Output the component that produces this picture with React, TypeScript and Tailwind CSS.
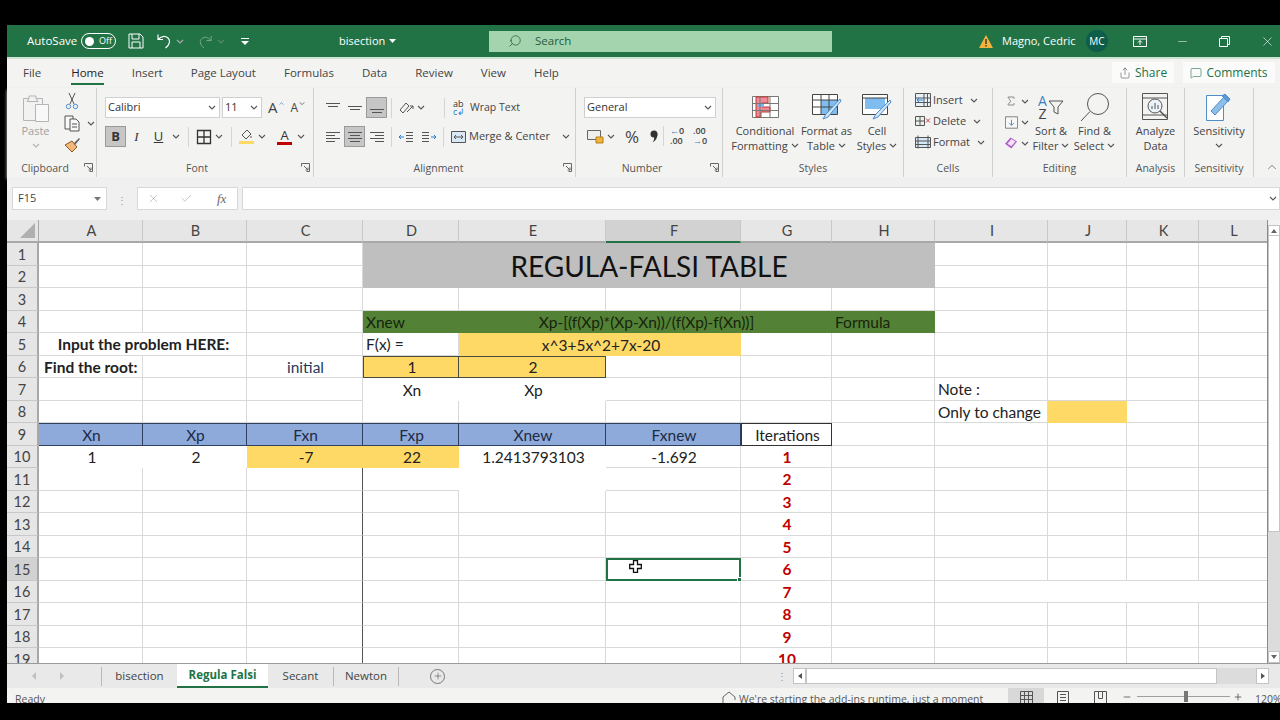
import type { ReactNode } from 'react'
import { ChevronUp, Sigma, X, Minus, Plus, Check, Search, MessageSquare, Share } from 'lucide-react'

const ui = "font-['Open_Sans',sans-serif]"
const sheet = "font-['Lato',sans-serif]"
const g = 'border-r border-b border-[#d9d9d9]'
const mid = 'justify-center pl-[2px]'
const columns = ['A', 'B', 'C', 'D', 'E', 'F', 'G', 'H', 'I', 'J', 'K', 'L']

type Cell = { t?: string; c?: string }

const blank = (n: number): Cell[] => Array.from({ length: n }, () => ({ c: g }))
const head = `bg-[#8eaadb] border-r border-y border-[#2f3f5f] ${mid} text-[#1d2a44]`
const yellow = `bg-[#ffd966] ${mid}`
const green = 'bg-[#538135] text-[#17240c]'
const darkRight = 'border-r border-b border-r-[#555555] border-b-[#d9d9d9]'

function iterRow(n: number, before: Cell[]): Cell[] {
  return [
    ...before,
    { t: String(n), c: `${g} ${mid} font-bold text-[#c00000]` },
    ...blank(5),
  ]
}

const plainLeft: Cell[] = [...blank(2), { c: darkRight }, ...blank(3)]

const rows: Cell[][] = [
  [
    ...blank(3),
    { t: 'REGULA-FALSI TABLE', c: 'col-span-5 row-span-2 bg-[#bfbfbf] justify-center !pt-0 text-[28px] text-[#111111]' },
    ...blank(4),
  ],
  [...blank(3), ...blank(4)],
  blank(12),
  [
    ...blank(3),
    { t: 'Xnew', c: `${green} pl-[3px]` },
    { t: 'Xp-[(f(Xp)*(Xp-Xn))/(f(Xp)-f(Xn))]', c: `${green} col-span-3 ${mid}` },
    { t: 'Formula', c: `${green} pl-[3px]` },
    ...blank(4),
  ],
  [
    { t: 'Input the problem HERE:', c: `${g} col-span-2 ${mid} font-bold` },
    ...blank(1),
    { t: 'F(x) =', c: `${g} pl-[3px]` },
    { t: 'x^3+5x^2+7x-20', c: `col-span-2 ${yellow}` },
    ...blank(6),
  ],
  [
    { t: 'Find the root:', c: `${g} pl-[5px] font-bold` },
    ...blank(1),
    { t: 'initial', c: `${g} ${mid} text-[#1f3a5c]` },
    { t: '1', c: `${yellow} border border-[#4a4a3a]` },
    { t: '2', c: `${yellow} border-y border-r border-[#4a4a3a]` },
    ...blank(7),
  ],
  [
    ...blank(3),
    { t: 'Xn', c: mid },
    { t: 'Xp', c: mid },
    { c: g },
    ...blank(2),
    { t: 'Note :', c: `${g} pl-[3px]` },
    ...blank(3),
  ],
  [
    ...blank(8),
    { t: 'Only to change', c: `${g} pl-[3px]` },
    { c: 'bg-[#ffd966]' },
    ...blank(2),
  ],
  [
    { t: 'Xn', c: head },
    { t: 'Xp', c: head },
    { t: 'Fxn', c: head },
    { t: 'Fxp', c: head },
    { t: 'Xnew', c: head },
    { t: 'Fxnew', c: head },
    { t: 'Iterations', c: `border border-[#333333] ${mid}` },
    ...blank(5),
  ],
  iterRow(1, [
    { t: '1', c: mid },
    { t: '2', c: mid },
    { t: '-7', c: yellow },
    { t: '22', c: yellow },
    { t: '1.2413793103', c: mid },
    { t: '-1.692', c: `${g} ${mid}` },
  ]),
  iterRow(2, [
    { c: g },
    { c: g },
    { c: darkRight },
    { c: 'border-b border-[#d9d9d9]' },
    {},
    { c: g },
  ]),
  iterRow(3, plainLeft),
  iterRow(4, plainLeft),
  iterRow(5, plainLeft),
  iterRow(6, [...blank(2), { c: darkRight }, ...blank(2), { c: 'border-2 border-[#217346] selected' }]),
  [
    ...blank(2),
    { c: darkRight },
    ...blank(3),
    { t: '7', c: `${g} ${mid} font-bold text-[#c00000]` },
    { c: g },
    { c: `${g} col-span-4` },
  ],
  iterRow(8, plainLeft),
  iterRow(9, plainLeft),
  iterRow(10, plainLeft),
]

function Chev({ className = '' }: { className?: string }) {
  return (
    <svg width="8" height="5" viewBox="0 0 8 5" className={`shrink-0 ${className}`} fill="none" stroke="#555555" strokeWidth="1.1">
      <path d="M1 1l3 3 3-3" />
    </svg>
  )
}

function Launcher() {
  return (
    <svg width="9" height="9" viewBox="0 0 9 9" className="absolute right-[3px] bottom-[5px]" fill="none" stroke="#666666">
      <path d="M.5 3.5v-3h8v8h-3M3 3l4 4M7 4.5V7H4.5" />
    </svg>
  )
}

function Group({ className, labelClass = '', label, launcher, children }: { className: string; labelClass?: string; label: string; launcher?: boolean; children: ReactNode }) {
  return (
    <div className={`relative flex h-full shrink-0 flex-col border-r border-[#d0d0d0] ${className}`}>
      <div className="h-[72px] w-full">{children}</div>
      <div className={`flex h-[17px] items-center justify-center text-[10.5px] text-[#555555] ${labelClass}`}>{label}</div>
      {launcher && <Launcher />}
    </div>
  )
}

function Lines({ rows: ys }: { rows: [number, number][] }) {
  return (
    <svg width="16" height="14" viewBox="0 0 16 14" fill="none" stroke="#555555">
      {ys.map(([a, b], i) => (
        <path key={i} d={`M${a} ${2.5 + i * 3}H${b}`} />
      ))}
    </svg>
  )
}

function Indent({ flip }: { flip?: boolean }) {
  return (
    <svg width="16" height="14" viewBox="0 0 16 14" fill="none" stroke="#555555" className={flip ? '-scale-x-100' : ''}>
      <path d="M8 2.500h7M8 5.500h7M8 8.500h7M8 11.500h7" />
      <path d="M1 7h5M1 7l2-2M1 7l2 2" stroke="#2b7cd3" />
    </svg>
  )
}

function Toggled({ on, className = '', children }: { on?: boolean; className?: string; children: ReactNode }) {
  return (
    <div className={`flex h-[21px] w-[21px] shrink-0 items-center justify-center ${on ? 'border border-[#9a9a9a] bg-[#c6c6c6]' : ''} ${className}`}>
      {children}
    </div>
  )
}

function Sep({ className = '' }: { className?: string }) {
  return <div className={`h-[20px] w-px shrink-0 bg-[#d5d5d5] ${className}`} />
}

function BigButton({ className, icon, first, second }: { className: string; icon: ReactNode; first: string; second: string }) {
  return (
    <div className={`flex flex-col items-center text-[#444444] ${className}`}>
      <div className="flex h-[30px] items-center">{icon}</div>
      <div className="mt-[1px] text-[11px] leading-[15px] whitespace-nowrap">{first}</div>
      <div className="flex items-center gap-[3px] text-[11px] leading-[15px] whitespace-nowrap">
        {second}
        <Chev />
      </div>
    </div>
  )
}

function TitleBar() {
  return (
    <div className={`flex h-[32px] shrink-0 items-center bg-[#217346] text-[11.5px] text-white ${ui}`}>
      <span className="ml-[20px] w-[54px] shrink-0">AutoSave</span>
      <div className="flex h-[16px] w-[35px] shrink-0 items-center gap-[5px] rounded-full border border-white pl-[3px] text-[9px]">
        <span className="h-[9px] w-[9px] rounded-full bg-white" />
        Off
      </div>
      <svg width="16" height="16" viewBox="0 0 16 16" className="ml-[12px] shrink-0" fill="none" stroke="white">
        <path d="M1 1h11l3 3v11H1zM4 1v5h7V1M4 15v-6h8v6" />
      </svg>
      <svg width="16" height="16" viewBox="0 0 16 16" className="ml-[12px] shrink-0" fill="none" stroke="white" strokeWidth="1.2">
        <path d="M2 1.5v5h5M2.3 6.5C5 3 9 2.6 12 5c2.6 2.4 2 6.5-2.5 10" />
      </svg>
      <Chev className="ml-[4px] invert" />
      <svg width="15" height="15" viewBox="0 0 16 16" className="ml-[14px] shrink-0 opacity-40" fill="none" stroke="white">
        <path d="M14 2v5H9M13.7 7C11 3 7 2.6 4 5c-2.600 2.400-2 6.500 2.500 10" />
      </svg>
      <Chev className="ml-[4px] opacity-40 invert" />
      <svg width="8" height="8" viewBox="0 0 8 8" className="ml-[16px] shrink-0" fill="white">
        <path d="M0 1h8v1H0zM0 4h8L4 8z" />
      </svg>
      <span className="ml-[90px] w-[46px] shrink-0 text-[11px]">bisection</span>
      <svg width="7" height="4" viewBox="0 0 7 4" className="ml-[4px] shrink-0" fill="white">
        <path d="M0 0h7L3.500 4z" />
      </svg>
      <div className="ml-[93px] flex h-[21px] w-[343px] shrink-0 items-center bg-[#a3d4ae] pl-[19px] text-[#2a5a3c]">
        <Search size={14} strokeWidth={1.3} className="-scale-x-100" />
        <span className="ml-[13px]">Search</span>
      </div>
      <svg width="14" height="13" viewBox="0 0 14 13" className="ml-[147px] shrink-0">
        <path d="M7 0l7 13H0z" fill="#f2b33d" />
        <path d="M6.300 4h1.400v5H6.300zM6.300 10h1.400v1.500H6.300z" fill="#333333" />
      </svg>
      <span className="ml-[9px] w-[73px] shrink-0 whitespace-nowrap text-[11px]">Magno, Cedric</span>
      <div className="ml-[11px] flex h-[22px] w-[22px] shrink-0 items-center justify-center rounded-full bg-[#0e5c4a] text-[10px]">MC</div>
      <svg width="14" height="11" viewBox="0 0 14 11" className="ml-[25px] shrink-0" fill="none" stroke="white">
        <path d="M.5.500h13v10H.5zM.5 3h13M7 9V4.500M5 6.500l2-2 2 2" />
      </svg>
      <Minus size={13} strokeWidth={1} className="ml-[29px] shrink-0" />
      <svg width="11" height="11" viewBox="0 0 11 11" className="ml-[30px] shrink-0" fill="none" stroke="white">
        <path d="M.5 2.500h8v8h-8zM2.500 2.500v-2h8v8h-2" />
      </svg>
      <X size={15} strokeWidth={1} className="ml-[30px] shrink-0" />
    </div>
  )
}

function TabsRow() {
  const tabs = ['File', 'Home', 'Insert', 'Page Layout', 'Formulas', 'Data', 'Review', 'View', 'Help']
  return (
    <div className={`flex h-[31px] shrink-0 items-center border-t-2 border-[#cfe3d4] bg-[#f3f3f2] pb-[2px] pl-[16px] text-[11.5px] text-[#444444] ${ui}`}>
      <div className="flex gap-[28px]">
        {tabs.map((tab) => (
          <div key={tab} className={`relative whitespace-nowrap ${tab === 'File' ? 'mr-[2px]' : ''} ${tab === 'Home' ? 'text-[#222222]' : ''}`}>
            {tab}
            {tab === 'Home' && <div className="absolute right-0 -bottom-[4px] left-0 h-[2px] bg-[#217346]" />}
          </div>
        ))}
      </div>
      <div className="ml-auto flex h-[21px] items-center gap-[9px] pr-[5px] text-[12px] text-[#217346]">
        <div className="flex h-full w-[62px] items-center justify-center gap-[4px] bg-[#fbfbfb]">
          <Share size={12} strokeWidth={1.2} className="text-[#555555]" />
          Share
        </div>
        <div className="flex h-full w-[92px] items-center justify-center gap-[4px] bg-[#fbfbfb]">
          <MessageSquare size={12} strokeWidth={1.2} />
          Comments
        </div>
      </div>
    </div>
  )
}

function Clipboard() {
  return (
    <Group className="w-[89px]" labelClass="pr-[14px]" label="Clipboard" launcher>
      <div className="flex">
        <div className="flex w-[50px] flex-col items-center pl-[5px] text-[11px] text-[#a0a0a0]">
          <svg width="28" height="30" viewBox="0 0 28 30" className="mt-[5px]" fill="#f2f2f2" stroke="#b5b5b5">
            <path d="M1.500 5.500h19v22h-19z" />
            <path d="M7 5.500V3h7v2.500l2 3H5z" />
            <path d="M13.500 11.500h13v17h-13z" fill="#f8f8f8" />
          </svg>
          <span className="leading-[15px]">Paste</span>
          <Chev className="mt-[5px] opacity-40" />
        </div>
        <div className="flex flex-col gap-[5px] pt-[4px] pl-[6px]">
          <svg width="16" height="18" viewBox="0 0 16 18" fill="none" stroke="#555555">
            <path d="M5 1l5 11M11 1L6 12" />
            <circle cx="4.500" cy="14.500" r="2.200" stroke="#4f8ec9" />
            <circle cx="11.500" cy="14.500" r="2.200" stroke="#4f8ec9" />
          </svg>
          <div className="flex items-center gap-[5px]">
            <svg width="18" height="17" viewBox="0 0 18 17" fill="#f8f8f8" stroke="#555555">
              <path d="M1 1h8v13H1z" />
              <path d="M6 4h6l3 3v9H6zM8 9h5M8 12h5" />
            </svg>
            <Chev />
          </div>
          <svg width="17" height="16" viewBox="0 0 17 16">
            <path d="M1 8l7-4 5 6-5 5z" fill="#f1b877" stroke="#8a5a20" />
            <path d="M10 6l5-5 1 1-5 6z" fill="#666666" />
          </svg>
        </div>
      </div>
    </Group>
  )
}

function Font() {
  return (
    <Group className="w-[217px]" labelClass="pr-[16px]" label="Font" launcher>
      <div className="flex items-center pt-[9px] pl-[8px] text-[11px] text-[#333333]">
        <div className="flex h-[21px] w-[115px] items-center justify-between border border-[#d0d0d0] bg-white pr-[3px] pl-[2px]">
          Calibri
          <Chev />
        </div>
        <div className="ml-[2px] flex h-[21px] w-[40px] items-center justify-between border border-[#d0d0d0] bg-white pr-[3px] pl-[2px]">
          11
          <Chev />
        </div>
        <span className="ml-[6px] text-[15px] leading-none text-[#444444]">A</span>
        <ChevronUp size={7} className="mb-[8px] text-[#2b6cb0]" />
        <span className="ml-[6px] text-[12px] leading-none text-[#444444]">A</span>
        <Chev className="mb-[8px] scale-75" />
      </div>
      <div className="mt-[8px] flex items-center pl-[8px] text-[13px] text-[#333333]">
        <Toggled on className="font-bold">B</Toggled>
        <Toggled className="font-['Liberation_Serif',serif] italic">I</Toggled>
        <Toggled className="ml-[1px] underline">U</Toggled>
        <Chev className="ml-[3px]" />
        <Sep className="ml-[8px]" />
        <svg width="16" height="16" viewBox="0 0 16 16" className="ml-[7px]" fill="none" stroke="#333333">
          <path d="M1.500 1.500h13v13h-13zM8 1.500v13M1.500 8h13" strokeWidth="1.300" />
        </svg>
        <Chev className="ml-[3px]" />
        <Sep className="ml-[8px]" />
        <div className="ml-[7px] flex w-[15px] flex-col items-center">
          <svg width="13" height="11" viewBox="0 0 13 11" fill="none" stroke="#555555">
            <path d="M2 6l5-5 4 4-5 5zM11 7v2" />
          </svg>
          <div className="mt-[1px] h-[3px] w-[15px] bg-[#ffd966]" />
        </div>
        <Chev className="ml-[4px]" />
        <div className="ml-[11px] flex w-[15px] flex-col items-center">
          <span className="text-[13px] leading-[12px]">A</span>
          <div className="mt-[1px] h-[3px] w-[15px] bg-[#c00000]" />
        </div>
        <Chev className="ml-[5px]" />
      </div>
    </Group>
  )
}

function Alignment() {
  return (
    <Group className="w-[262px]" labelClass="pr-[12px]" label="Alignment" launcher>
      <div className="flex items-center pt-[9px] pl-[8px] text-[11px] text-[#444444]">
        <Toggled><Lines rows={[[1, 15], [3, 13]]} /></Toggled>
        <Toggled className="ml-[1px]"><Lines rows={[[16, 16], [1, 15], [3, 13]]} /></Toggled>
        <Toggled on className="ml-[1px]"><Lines rows={[[16, 16], [16, 16], [1, 15], [3, 13]]} /></Toggled>
        <Sep className="ml-[4px]" />
        <svg width="17" height="16" viewBox="0 0 17 16" className="ml-[6px]" fill="none" stroke="#555555">
          <path d="M2 10l6-7 3 3-6 7zM9 12l6-6M15 6v3M15 6h-3" />
        </svg>
        <Chev className="ml-[2px]" />
        <Sep className="ml-[19px]" />
        <div className="ml-[8px] flex items-center gap-[3px] whitespace-nowrap">
          <div className="flex w-[14px] flex-col text-[9px] leading-[8px] text-[#333333]">
            <span>ab</span>
            <span className="text-[#2b7cd3]">c↲</span>
          </div>
          <span className="text-[10.5px]">Wrap Text</span>
        </div>
      </div>
      <div className="mt-[8px] flex items-center pl-[8px] text-[11px] text-[#444444]">
        <Toggled><Lines rows={[[1, 15], [1, 10], [1, 15], [1, 10]]} /></Toggled>
        <Toggled on className="ml-[1px]"><Lines rows={[[1, 15], [3, 13], [1, 15], [3, 13]]} /></Toggled>
        <Toggled className="ml-[1px]"><Lines rows={[[1, 15], [6, 15], [1, 15], [6, 15]]} /></Toggled>
        <Sep className="ml-[4px]" />
        <Toggled className="ml-[3px]"><Indent /></Toggled>
        <Toggled className="ml-[2px]"><Indent flip /></Toggled>
        <Sep className="ml-[4px]" />
        <svg width="15" height="14" viewBox="0 0 15 14" className="ml-[7px]" fill="#d8e8f5" stroke="#555555">
          <path d="M.5 1.500h14v11H.5zM3 7h9M3 7l2-2M3 7l2 2M12 7l-2-2M12 7l-2 2" />
        </svg>
        <span className="ml-[3px] whitespace-nowrap">Merge &amp; Center</span>
        <Chev className="ml-[12px]" />
      </div>
    </Group>
  )
}

function NumberGroup() {
  return (
    <Group className="w-[147px]" labelClass="pr-[14px]" label="Number" launcher>
      <div className="pt-[9px] pl-[8px]">
        <div className="flex h-[21px] w-[132px] items-center justify-between border border-[#d0d0d0] bg-white pr-[3px] pl-[2px] text-[11px] text-[#333333]">
          General
          <Chev />
        </div>
      </div>
      <div className="mt-[8px] flex items-center pl-[11px] text-[#444444]">
        <svg width="17" height="15" viewBox="0 0 17 15" fill="#eeeeee" stroke="#666666">
          <path d="M.5 1.500h13v9H.5z" />
          <path d="M9 8h7v6H9z" fill="#f2b33d" stroke="#b57c1a" />
        </svg>
        <Chev className="ml-[3px]" />
        <span className="ml-[10px] w-[16px] text-[17px] leading-none">%</span>
        <svg width="8" height="13" viewBox="0 0 8 13" className="ml-[9px]" fill="#333333">
          <circle cx="4" cy="4" r="3.500" />
          <path d="M7.500 4c0 4-2 7-5 8.500 1.500-2 2-4 1.500-6z" />
        </svg>
        <Sep className="ml-[5px]" />
        <div className="ml-[6px] w-[17px] text-[9px] font-semibold leading-[10px] whitespace-nowrap text-[#444444]">
          <div><span className="text-[#3b82c4]">←</span>0</div>
          <div>.00</div>
        </div>
        <div className="ml-[6px] w-[17px] text-[9px] font-semibold leading-[10px] whitespace-nowrap text-[#444444]">
          <div>.00</div>
          <div><span className="text-[#3b82c4]">→</span>0</div>
        </div>
      </div>
    </Group>
  )
}

function Styles() {
  return (
    <Group className="w-[181px]" label="Styles">
      <div className="flex pt-[4px] pl-[9px]">
        <BigButton
          className="w-[66px]"
          first="Conditional"
          second="Formatting"
          icon={
            <svg width="27" height="22" viewBox="0 0 27 22" fill="#ffffff" stroke="#777777">
              <path d="M.5.500h26v21H.5z" />
              <path d="M4 1h12v6h-6v4h8v5H9v5H4z" fill="#ef8a9b" stroke="#c0392b" />
              <path d="M5 8h7v3H5z" fill="#7fb2e5" stroke="none" />
              <path d="M8 .500v21M18 .500v21M.5 7.500h26M.5 14.500h26" />
            </svg>
          }
        />
        <BigButton
          className="ml-[-4px] w-[65px]"
          first="Format as"
          second="Table"
          icon={
            <svg width="30" height="26" viewBox="0 0 30 26" fill="#ffffff" stroke="#444444">
              <path d="M.5.500h25v20H.5z" />
              <path d="M9 6h16v14H9z" fill="#7fbdf0" stroke="none" />
              <path d="M.5 6h25M9 .500v20M17 .500v20M.5 13h25" />
              <path d="M28 5L14 20l-3 5 5-2 13-16z" fill="#cfe4f5" stroke="#4f8ec9" />
            </svg>
          }
        />
        <BigButton
          className="ml-[-3px] w-[42px]"
          first="Cell"
          second="Styles"
          icon={
            <svg width="30" height="26" viewBox="0 0 30 26" fill="#ffffff" stroke="#444444">
              <path d="M.5.500h25v20H.5z" />
              <path d="M3 4h20v11H3z" fill="#7fbdf0" stroke="none" />
              <path d="M.5 4h25" />
              <path d="M28 6L14 20l-3 5 5-2 13-15z" fill="#cfe4f5" stroke="#4f8ec9" />
            </svg>
          }
        />
      </div>
    </Group>
  )
}

function CellsGroup() {
  const items: [string, ReactNode][] = [
    ['Insert', (
      <g key="i">
        <path d="M.5.500h15v13H.5zM9 .500v13M12.500 .500v13M.5 5h15M.5 9.500h15" fill="#e8f1f8" />
        <path d="M2 7h6M2 7l2-2M2 7l2 2" stroke="#2b7cd3" />
      </g>
    )],
    ['Delete', (
      <g key="d">
        <path d="M.5 2.500h9v9h-9zM.5 7h9M5 2.500v9" fill="#eaf3ea" />
        <path d="M11 4.500l4 4M15 4.500l-4 4" stroke="#d13438" />
      </g>
    )],
    ['Format', <path key="f" d="M.5 2.500h15v10H.5zM3 .500v13M13 .500v13M.5 6h15M.5 9.500h15" fill="#d7e7f4" />],
  ]
  return (
    <Group className="w-[89px]" label="Cells">
      <div className="flex flex-col gap-[7px] pt-[5px] pl-[11px] text-[11px] text-[#444444]">
        {items.map(([label, shape]) => (
          <div key={label} className="flex h-[14px] items-center">
            <svg width="16" height="14" viewBox="0 0 16 14" fill="none" stroke="#555555" className="shrink-0">
              {shape}
            </svg>
            <span className="ml-[2px]">{label}</span>
            <Chev className="ml-[7px]" />
          </div>
        ))}
      </div>
    </Group>
  )
}

function Editing() {
  return (
    <Group className="w-[134px]" label="Editing">
      <div className="flex pt-[4px]">
        <div className="flex w-[36px] flex-col gap-[6px] pt-[1px] pl-[12px]">
          <div className="flex items-center gap-[4px]">
            <Sigma size={16} strokeWidth={1.2} className="text-[#444444]" />
            <Chev />
          </div>
          <div className="flex items-center gap-[3px]">
            <svg width="16" height="15" viewBox="0 0 16 15" fill="none" stroke="#666666">
              <path d="M.5.500h15v14H.5z" fill="#f8f8f8" />
              <path d="M8 4v7M5 8l3 3 3-3" stroke="#2b7cd3" />
            </svg>
            <Chev />
          </div>
          <div className="flex items-center gap-[4px]">
            <svg width="15" height="14" viewBox="0 0 15 14">
              <path d="M0 8l7-8 8 5-7 9z" fill="#b05cc6" />
              <path d="M3 8l5-6 5 3-5 6z" fill="#f4e1f8" />
            </svg>
            <Chev />
          </div>
        </div>
        <BigButton
          className="ml-[-2px] w-[48px]"
          first="Sort &"
          second="Filter"
          icon={
            <div className="flex items-center gap-[1px] text-[#444444]">
              <div className="text-center text-[14px] leading-[13px]">
                <div className="text-[#3b82c4]">A</div>
                <div>Z</div>
              </div>
              <svg width="16" height="16" viewBox="0 0 16 16" fill="none" stroke="#555555">
                <path d="M1 2h14L10 8v7l-4-2V8z" />
              </svg>
            </div>
          }
        />
        <BigButton
          className="ml-[-1px] w-[41px]"
          first="Find &"
          second="Select"
          icon={
            <svg width="30" height="30" viewBox="0 0 30 30" fill="none" stroke="#555555">
              <circle cx="18" cy="12" r="10.500" />
              <path d="M10 19.500L1 29" />
            </svg>
          }
        />
      </div>
    </Group>
  )
}

function Analysis() {
  return (
    <Group className="w-[58px]" label="Analysis">
      <div className="flex flex-col items-center pt-[4px] text-[11px] leading-[15px] text-[#444444]">
        <div className="flex h-[30px] items-center">
          <svg width="27" height="28" viewBox="0 0 27 28" fill="none" stroke="#555555">
            <path d="M.5.500h25v26H.5zM.5 5h25M.5 22h25" />
            <circle cx="13" cy="13" r="7" fill="#eaf3fa" />
            <path d="M10 16v-3M13 16v-6M16 16v-4" />
            <path d="M18 18l7 7" strokeWidth="1.500" />
          </svg>
        </div>
        <span className="mt-[1px]">Analyze</span>
        <span>Data</span>
      </div>
    </Group>
  )
}

function Sensitivity() {
  return (
    <Group className="w-[69px]" label="Sensitivity">
      <div className="flex flex-col items-center pt-[4px] text-[11px] leading-[15px] text-[#444444]">
        <div className="flex h-[30px] items-center">
          <svg width="26" height="28" viewBox="0 0 26 28" fill="#ffffff" stroke="#4f8ec9">
            <path d="M.5 2.500h17v25H.5z" />
            <path d="M5 18l13-14 4 4L9 22z" fill="#8dbfe8" />
            <path d="M16 3l3-2 5 5-2 3z" fill="#5b9bd5" />
          </svg>
        </div>
        <span className="mt-[1px]">Sensitivity</span>
        <Chev className="mt-[5px]" />
      </div>
    </Group>
  )
}

function Ribbon() {
  return (
    <div className={`flex h-[89px] shrink-0 bg-[#f3f3f2] pl-px shadow-[0_2px_3px_#c8c8c8] ${ui}`}>
      <Clipboard />
      <Font />
      <Alignment />
      <NumberGroup />
      <Styles />
      <CellsGroup />
      <Editing />
      <Analysis />
      <Sensitivity />
      <div className="flex flex-1 items-end justify-end pr-[1px] pb-[3px]">
        <ChevronUp size={14} strokeWidth={1.2} className="text-[#555555]" />
      </div>
    </div>
  )
}

function FormulaBar() {
  return (
    <div className={`flex h-[43px] shrink-0 bg-[#f0f0f0] pt-[10px] pl-[5px] ${ui}`}>
      <div className="flex h-[23px] w-[95px] items-center justify-between border border-[#d8d8d8] bg-white pr-[5px] pl-[5px] text-[11px] text-[#444444]">
        F15
        <svg width="7" height="4" viewBox="0 0 7 4" fill="#777777">
          <path d="M0 0h7L3.500 4z" />
        </svg>
      </div>
      <div className="flex w-[30px] items-center justify-center pb-[8px] text-[10px] leading-none text-[#999999]">⋮</div>
      <div className="flex h-[23px] w-[101px] items-center border border-[#d8d8d8] bg-white pl-[9px] text-[#b0b0b0]">
        <X size={13} strokeWidth={1.3} />
        <Check size={13} strokeWidth={1.3} className="ml-[20px]" />
        <span className="ml-[24px] font-['Liberation_Serif',serif] text-[13px] italic text-[#666666]">fx</span>
      </div>
      <div className="ml-[4px] flex h-[23px] flex-1 items-center justify-end border border-[#d8d8d8] bg-white pr-[2px]">
        <Chev />
      </div>
    </div>
  )
}

function Grid() {
  let rowNo = 0
  return (
    <div className={`grid h-full w-[1261px] shrink-0 grid-cols-[32px_104px_104px_116px_96px_147px_135px_91px_103px_113px_79px_72px_69px] grid-rows-[23px] auto-rows-[22.5px] overflow-hidden border-r border-[#8a8a8a] bg-white text-[15.5px] text-[#222222] ${sheet}`}>
      <div className="flex items-end justify-end border-r border-b-2 border-[#a8a8a8] bg-[#e6e6e6] p-[3px]">
        <div className="h-0 w-0 border-b-[15px] border-l-[15px] border-b-[#b0b0b0] border-l-transparent" />
      </div>
      {columns.map((col) => (
        <div
          key={col}
          className={`flex items-center justify-center border-r border-b-2 border-r-[#c8c8c8] pl-[2px] text-[14.5px] text-[#444444] ${col === 'F' ? 'border-b-[#217346] bg-[#d2d2d2]' : 'border-b-[#a8a8a8] bg-[#e6e6e6]'}`}
        >
          {col}
        </div>
      ))}
      {rows.flatMap((cells, r) => {
        rowNo = r + 1
        return [
          <div
            key={`h${rowNo}`}
            className={`flex items-center justify-center border-r-2 border-b border-r-[#a8a8a8] border-b-[#c8c8c8] pt-[2px] text-[14.5px] text-[#444444] ${rowNo === 15 ? 'bg-[#d2d2d2] text-[#217346]' : 'bg-[#e6e6e6]'}`}
          >
            {rowNo}
          </div>,
          ...cells.map((cell, i) => (
            <div key={`${rowNo}-${i}`} className={`relative flex items-center whitespace-nowrap pt-[2px] ${cell.c ?? ''}`}>
              {cell.t}
              {cell.c?.includes('selected') && (
                <>
                  <div className="absolute -right-[3px] -bottom-[3px] h-[5px] w-[5px] border border-white bg-[#217346]" />
                  <svg width="13" height="13" viewBox="0 0 13 13" className="absolute top-0 left-[21px]" fill="white" stroke="#111111" strokeWidth="1.3">
                    <path d="M4.500.700h4v3.800h3.800v4H8.500v3.800h-4V8.500H.7v-4h3.800z" />
                  </svg>
                </>
              )}
            </div>
          )),
        ]
      })}
    </div>
  )
}

function VScroll() {
  return (
    <div className="flex w-[12px] flex-col bg-[#dcdcdc]">
      <div className="h-[5px] bg-[#f3f3f3]" />
      <div className="flex h-[11px] items-center justify-center border border-[#c4c4c4] bg-white">
        <div className="h-0 w-0 border-x-[3px] border-b-[4px] border-x-transparent border-b-[#666666]" />
      </div>
      <div className="h-[296px] border-x border-b border-[#c4c4c4] bg-white" />
      <div className="flex-1" />
      <div className="flex h-[12px] items-center justify-center border border-[#c4c4c4] bg-white">
        <div className="h-0 w-0 border-x-[3px] border-t-[4px] border-x-transparent border-t-[#666666]" />
      </div>
    </div>
  )
}

function SheetTabs() {
  return (
    <div className={`flex h-[25px] shrink-0 items-center border-t border-[#9a9a9a] bg-[#e9e9e9] text-[11.5px] text-[#444444] ${ui}`}>
      <div className="ml-[25px] h-0 w-0 border-y-[4px] border-r-[4px] border-y-transparent border-r-[#c0c0c0]" />
      <div className="ml-[24px] h-0 w-0 border-y-[4px] border-l-[4px] border-y-transparent border-l-[#c0c0c0]" />
      <div className="ml-[37px] h-[19px] w-px bg-[#b8b8b8]" />
      <div className="flex w-[75px] justify-center">bisection</div>
      <div className="relative flex h-full w-[91px] items-center justify-center border-b-2 border-[#217346] bg-white font-bold text-[#217346]">
        Regula Falsi
      </div>
      <div className="flex w-[65px] justify-center">Secant</div>
      <div className="h-[19px] w-px bg-[#b8b8b8]" />
      <div className="flex w-[64px] justify-center">Newton</div>
      <div className="h-[19px] w-px bg-[#b8b8b8]" />
      <div className="ml-[31px] flex h-[15px] w-[15px] items-center justify-center rounded-full border border-[#777777]">
        <Plus size={10} strokeWidth={1.3} />
      </div>
      <div className="ml-[332px] w-[4px] text-[10px] leading-none text-[#999999]">⋮</div>
      <div className="ml-[12px] flex h-[16px] w-[476px] items-center bg-[#dcdcdc]">
        <div className="flex h-full w-[13px] items-center justify-center border border-[#c4c4c4] bg-white">
          <div className="h-0 w-0 border-y-[3px] border-r-[4px] border-y-transparent border-r-[#555555]" />
        </div>
        <div className="h-full w-[411px] border border-[#c4c4c4] bg-white" />
        <div className="ml-auto flex h-full w-[13px] items-center justify-center border border-[#c4c4c4] bg-white">
          <div className="h-0 w-0 border-y-[3px] border-l-[4px] border-y-transparent border-l-[#555555]" />
        </div>
      </div>
    </div>
  )
}

function StatusBar() {
  return (
    <div className={`flex h-[15px] shrink-0 items-start overflow-hidden bg-[#f3f3f2] text-[10.5px] leading-[22px] text-[#555555] ${ui}`}>
      <span className="ml-[8px] w-[707px] shrink-0">Ready</span>
      <svg width="14" height="15" viewBox="0 0 14 15" className="mt-[3px] mr-[3px] shrink-0" fill="none" stroke="#666666">
        <path d="M1 14V6l6-5 6 5v3" />
      </svg>
      <span className="w-[269px] shrink-0 whitespace-nowrap">We're starting the add-ins runtime, just a moment</span>
      <div className="flex h-full w-[36px] shrink-0 items-start justify-center bg-[#d8d8d8] pt-[3px]">
        <svg width="13" height="13" viewBox="0 0 13 13" fill="none" stroke="#555555">
          <path d="M.5.500h12v12H.5zM4.500.500v12M8.500.500v12M.5 4.500h12M.5 8.500h12" />
        </svg>
      </div>
      <div className="flex w-[38px] shrink-0 justify-center pt-[3px]">
        <svg width="12" height="13" viewBox="0 0 12 13" fill="none" stroke="#555555">
          <path d="M.5.500h11v12H.5zM3 3.500h6M3 6.500h6M3 9.500h6" />
        </svg>
      </div>
      <div className="flex w-[37px] shrink-0 justify-center pt-[3px]">
        <svg width="13" height="13" viewBox="0 0 13 13" fill="none" stroke="#555555">
          <path d="M.5.500h12v12H.5zM4.500.500v7h4v-7" />
        </svg>
      </div>
      <Minus size={10} className="mt-[4px] ml-[3px] shrink-0" />
      <div className="mt-[8px] ml-[5px] flex h-px w-[93px] shrink-0 justify-center bg-[#a0a0a0]">
        <div className="-mt-[5px] ml-[5px] h-[11px] w-[4px] bg-[#777777]" />
      </div>
      <Plus size={10} className="mt-[4px] ml-[3px] shrink-0" />
      <span className="ml-[12px] shrink-0 whitespace-nowrap">120%</span>
    </div>
  )
}

export default function App() {
  return (
    <div className="flex h-[720px] w-[1280px] flex-col overflow-hidden bg-black pt-[25px] pb-[17px] pl-[7px]">
      <TitleBar />
      <TabsRow />
      <Ribbon />
      <FormulaBar />
      <div className="flex h-[443px] shrink-0 bg-white">
        <Grid />
        <VScroll />
      </div>
      <SheetTabs />
      <StatusBar />
    </div>
  )
}
